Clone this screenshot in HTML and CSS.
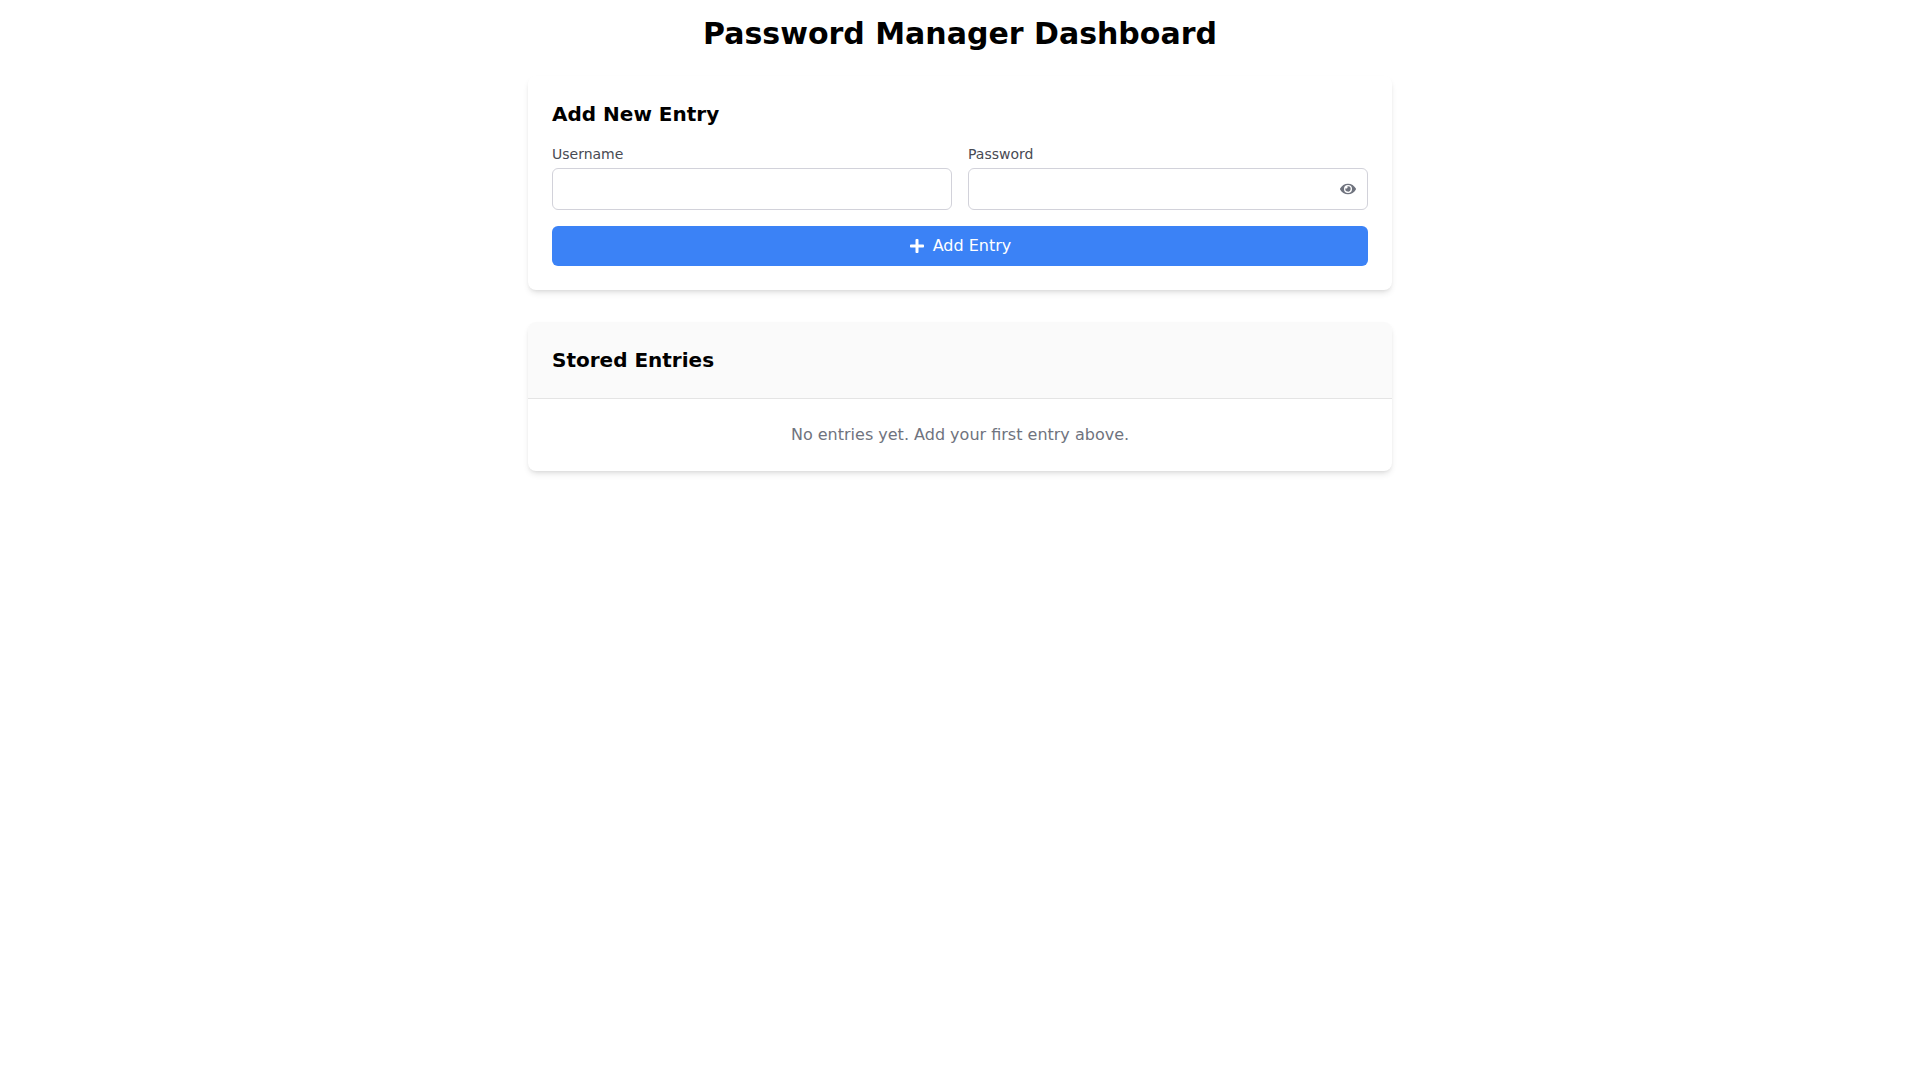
FILE: index.html
```
<!DOCTYPE html>
<html lang="en">
<head>
<meta charset="UTF-8">
<meta name="viewport" content="width=device-width, initial-scale=1.0">
<title>Password Manager Dashboard</title>
<link rel="stylesheet" href="styles.css">
</head>
<body>
<div class="container">
    <h1>Password Manager Dashboard</h1>

    <form class="card entry-form" onsubmit="return false">
        <h2>Add New Entry</h2>
        <div class="fields">
            <div class="field">
                <label for="username">Username</label>
                <input type="text" id="username">
            </div>
            <div class="field">
                <label for="password">Password</label>
                <div class="password-wrap">
                    <input type="password" id="password">
                    <button type="button" class="toggle" aria-label="Show password" onclick="togglePassword()">
                        <svg class="icon" viewBox="0 0 576 512" fill="currentColor"><path d="M572.52 241.4C518.29 135.59 410.93 64 288 64S57.68 135.64 3.48 241.41a32.35 32.35 0 0 0 0 29.19C57.71 376.41 165.07 448 288 448s230.32-71.64 284.52-177.41a32.35 32.35 0 0 0 0-29.19zM288 400a144 144 0 1 1 144-144 143.93 143.93 0 0 1-144 144zm0-240a95.31 95.31 0 0 0-25.31 3.79 47.85 47.85 0 0 1-66.9 66.9A95.78 95.78 0 1 0 288 160z"/></svg>
                    </button>
                </div>
            </div>
        </div>
        <button type="submit" class="add-button">
            <svg class="icon" viewBox="0 0 448 512" fill="currentColor"><path d="M416 208H272V64c0-17.67-14.33-32-32-32h-32c-17.67 0-32 14.33-32 32v144H32c-17.67 0-32 14.33-32 32v32c0 17.67 14.33 32 32 32h144v144c0 17.67 14.33 32 32 32h32c17.67 0 32-14.33 32-32V304h144c17.67 0 32-14.33 32-32v-32c0-17.67-14.33-32-32-32z"/></svg>
            Add Entry
        </button>
    </form>

    <div class="card entries">
        <div class="entries-header">
            <h2>Stored Entries</h2>
        </div>
        <p class="empty">No entries yet. Add your first entry above.</p>
    </div>
</div>

<script>
function togglePassword() {
    const input = document.getElementById('password');
    input.type = input.type === 'password' ? 'text' : 'password';
}
</script>
</body>
</html>
```
FILE: styles.css
```
* {
    box-sizing: border-box;
    margin: 0;
    padding: 0;
}

body {
    font-family: "DejaVu Sans", sans-serif;
    font-size: 16px;
    line-height: 24px;
    color: #000;
    background-color: #fff;
}

.container {
    max-width: 896px;
    margin: 0 auto;
    padding: 16px;
}

h1 {
    margin-bottom: 24px;
    font-size: 30px;
    line-height: 36px;
    text-align: center;
}

h2 {
    font-size: 20px;
    line-height: 28px;
}

.card {
    background-color: #fff;
    border-radius: 8px;
    box-shadow: 0 4px 6px -1px rgba(0, 0, 0, 0.1), 0 2px 4px -2px rgba(0, 0, 0, 0.1);
}

/* Add entry form */
.entry-form {
    margin-bottom: 32px;
    padding: 24px;
}

.entry-form h2 {
    margin-bottom: 16px;
}

.fields {
    display: grid;
    grid-template-columns: 1fr 1fr;
    gap: 16px;
    margin-bottom: 16px;
}

label {
    display: block;
    margin-bottom: 4px;
    font-size: 14px;
    line-height: 20px;
    color: #484a53;
}

input {
    display: block;
    width: 100%;
    height: 42px;
    padding: 8px 12px;
    font: inherit;
    border: 1px solid #d2d2da;
    border-radius: 6px;
}

button {
    font: inherit;
    border: none;
    cursor: pointer;
}

.icon {
    display: block;
    width: 16px;
    height: 16px;
}

.password-wrap {
    position: relative;
}

.toggle {
    position: absolute;
    top: 0;
    right: 0;
    bottom: 0;
    padding: 0 12px;
    color: #6f737e;
    background: none;
}

.add-button {
    display: flex;
    align-items: center;
    justify-content: center;
    gap: 8px;
    width: 100%;
    padding: 8px 16px;
    color: #fff;
    background-color: #3b82f6;
    border-radius: 6px;
}

/* Stored entries */
.entries {
    overflow: hidden;
}

.entries-header {
    padding: 24px;
    background-color: #fafafa;
    border-bottom: 1px solid #e4e4e4;
}

.empty {
    padding: 24px;
    text-align: center;
    color: #6f737e;
}
```
